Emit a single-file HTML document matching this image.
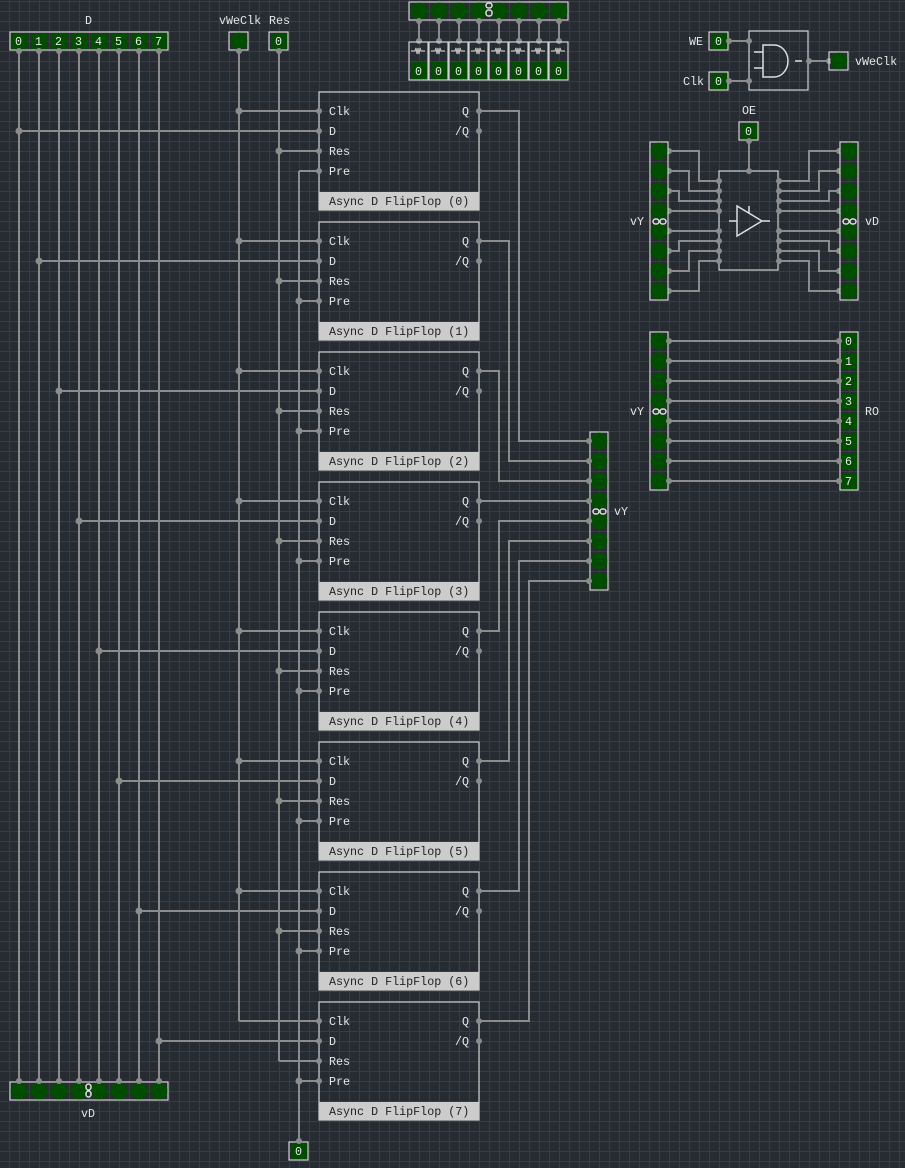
<!DOCTYPE html>
<html><head><meta charset="utf-8"><style>
html,body{margin:0;padding:0;background:#262c31;}
svg{display:block}
text{font-family:"Liberation Mono","DejaVu Sans Mono",monospace;font-size:11.7px;fill:#e6e6e6}
.w{stroke:#8c8c8c;stroke-width:2;fill:none}
.b{stroke:#d0d0d0;stroke-width:1.2;fill:none}
.g{fill:#004d00}
.d{fill:#8c8c8c}
.t{fill:#222;font-size:11.7px}
</style></head><body>
<svg width="905" height="1168" viewBox="0 0 905 1168" xmlns="http://www.w3.org/2000/svg">
<defs>
<pattern id="gp" x="9" y="1" width="10" height="10" patternUnits="userSpaceOnUse">
<rect x="0" y="0" width="10" height="1" fill="#363e44"/><rect x="0" y="0" width="1" height="10" fill="#363e44"/>
</pattern>
</defs>
<rect width="905" height="1168" fill="#262c31"/>
<rect width="905" height="1168" fill="url(#gp)"/>

<path class="w" d="M19 51V1081M39 51V1081M59 51V1081M79 51V1081M99 51V1081M119 51V1081M139 51V1081M159 51V1081M239 51V1021M279 51V1061M299 171V1141"/>

<path class="w" d="M239 111H319M19 131H319M279 151H319M299 171H319
M239 241H319M39 261H319M279 281H319M299 301H319
M239 371H319M59 391H319M279 411H319M299 431H319
M239 501H319M79 521H319M279 541H319M299 561H319
M239 631H319M99 651H319M279 671H319M299 691H319
M239 761H319M119 781H319M279 801H319M299 821H319
M239 891H319M139 911H319M279 931H319M299 951H319
M239 1021H319M159 1041H319M279 1061H319M299 1081H319
M479 111H519V441H589M479 241H509V461H589M479 371H499V481H589M479 501H589
M479 631H499V521H589M479 761H509V541H589M479 891H519V561H589M479 1021H529V581H589"/>
<g class="d">
<circle cx="239" cy="111" r="3.5"/><circle cx="19" cy="131" r="3.5"/><circle cx="279" cy="151" r="3.5"/>
<circle cx="239" cy="241" r="3.5"/><circle cx="39" cy="261" r="3.5"/><circle cx="279" cy="281" r="3.5"/><circle cx="299" cy="301" r="3.5"/>
<circle cx="239" cy="371" r="3.5"/><circle cx="59" cy="391" r="3.5"/><circle cx="279" cy="411" r="3.5"/><circle cx="299" cy="431" r="3.5"/>
<circle cx="239" cy="501" r="3.5"/><circle cx="79" cy="521" r="3.5"/><circle cx="279" cy="541" r="3.5"/><circle cx="299" cy="561" r="3.5"/>
<circle cx="239" cy="631" r="3.5"/><circle cx="99" cy="651" r="3.5"/><circle cx="279" cy="671" r="3.5"/><circle cx="299" cy="691" r="3.5"/>
<circle cx="239" cy="761" r="3.5"/><circle cx="119" cy="781" r="3.5"/><circle cx="279" cy="801" r="3.5"/><circle cx="299" cy="821" r="3.5"/>
<circle cx="239" cy="891" r="3.5"/><circle cx="139" cy="911" r="3.5"/><circle cx="279" cy="931" r="3.5"/><circle cx="299" cy="951" r="3.5"/>
<circle cx="159" cy="1041" r="3.5"/><circle cx="299" cy="1081" r="3.5"/>
</g>

<g id="ffs">
<g transform="translate(0,0)">
<rect class="b" x="319" y="92" width="160" height="118"/><rect x="319" y="192" width="160" height="18" fill="#cccccc"/>
<text x="329" y="115">Clk</text><text x="329" y="135">D</text><text x="329" y="155">Res</text><text x="329" y="175">Pre</text>
<text x="462" y="115">Q</text><text x="455" y="135">/Q</text><text class="t" x="329" y="205">Async D FlipFlop (0)</text>
<g class="d"><circle cx="319" cy="111" r="3"/><circle cx="319" cy="131" r="3"/><circle cx="319" cy="151" r="3"/><circle cx="319" cy="171" r="3"/><circle cx="479" cy="111" r="3"/><circle cx="479" cy="131" r="3"/></g>
</g>
<g transform="translate(0,130)">
<rect class="b" x="319" y="92" width="160" height="118"/><rect x="319" y="192" width="160" height="18" fill="#cccccc"/>
<text x="329" y="115">Clk</text><text x="329" y="135">D</text><text x="329" y="155">Res</text><text x="329" y="175">Pre</text>
<text x="462" y="115">Q</text><text x="455" y="135">/Q</text><text class="t" x="329" y="205">Async D FlipFlop (1)</text>
<g class="d"><circle cx="319" cy="111" r="3"/><circle cx="319" cy="131" r="3"/><circle cx="319" cy="151" r="3"/><circle cx="319" cy="171" r="3"/><circle cx="479" cy="111" r="3"/><circle cx="479" cy="131" r="3"/></g>
</g>
<g transform="translate(0,260)">
<rect class="b" x="319" y="92" width="160" height="118"/><rect x="319" y="192" width="160" height="18" fill="#cccccc"/>
<text x="329" y="115">Clk</text><text x="329" y="135">D</text><text x="329" y="155">Res</text><text x="329" y="175">Pre</text>
<text x="462" y="115">Q</text><text x="455" y="135">/Q</text><text class="t" x="329" y="205">Async D FlipFlop (2)</text>
<g class="d"><circle cx="319" cy="111" r="3"/><circle cx="319" cy="131" r="3"/><circle cx="319" cy="151" r="3"/><circle cx="319" cy="171" r="3"/><circle cx="479" cy="111" r="3"/><circle cx="479" cy="131" r="3"/></g>
</g>
<g transform="translate(0,390)">
<rect class="b" x="319" y="92" width="160" height="118"/><rect x="319" y="192" width="160" height="18" fill="#cccccc"/>
<text x="329" y="115">Clk</text><text x="329" y="135">D</text><text x="329" y="155">Res</text><text x="329" y="175">Pre</text>
<text x="462" y="115">Q</text><text x="455" y="135">/Q</text><text class="t" x="329" y="205">Async D FlipFlop (3)</text>
<g class="d"><circle cx="319" cy="111" r="3"/><circle cx="319" cy="131" r="3"/><circle cx="319" cy="151" r="3"/><circle cx="319" cy="171" r="3"/><circle cx="479" cy="111" r="3"/><circle cx="479" cy="131" r="3"/></g>
</g>
<g transform="translate(0,520)">
<rect class="b" x="319" y="92" width="160" height="118"/><rect x="319" y="192" width="160" height="18" fill="#cccccc"/>
<text x="329" y="115">Clk</text><text x="329" y="135">D</text><text x="329" y="155">Res</text><text x="329" y="175">Pre</text>
<text x="462" y="115">Q</text><text x="455" y="135">/Q</text><text class="t" x="329" y="205">Async D FlipFlop (4)</text>
<g class="d"><circle cx="319" cy="111" r="3"/><circle cx="319" cy="131" r="3"/><circle cx="319" cy="151" r="3"/><circle cx="319" cy="171" r="3"/><circle cx="479" cy="111" r="3"/><circle cx="479" cy="131" r="3"/></g>
</g>
<g transform="translate(0,650)">
<rect class="b" x="319" y="92" width="160" height="118"/><rect x="319" y="192" width="160" height="18" fill="#cccccc"/>
<text x="329" y="115">Clk</text><text x="329" y="135">D</text><text x="329" y="155">Res</text><text x="329" y="175">Pre</text>
<text x="462" y="115">Q</text><text x="455" y="135">/Q</text><text class="t" x="329" y="205">Async D FlipFlop (5)</text>
<g class="d"><circle cx="319" cy="111" r="3"/><circle cx="319" cy="131" r="3"/><circle cx="319" cy="151" r="3"/><circle cx="319" cy="171" r="3"/><circle cx="479" cy="111" r="3"/><circle cx="479" cy="131" r="3"/></g>
</g>
<g transform="translate(0,780)">
<rect class="b" x="319" y="92" width="160" height="118"/><rect x="319" y="192" width="160" height="18" fill="#cccccc"/>
<text x="329" y="115">Clk</text><text x="329" y="135">D</text><text x="329" y="155">Res</text><text x="329" y="175">Pre</text>
<text x="462" y="115">Q</text><text x="455" y="135">/Q</text><text class="t" x="329" y="205">Async D FlipFlop (6)</text>
<g class="d"><circle cx="319" cy="111" r="3"/><circle cx="319" cy="131" r="3"/><circle cx="319" cy="151" r="3"/><circle cx="319" cy="171" r="3"/><circle cx="479" cy="111" r="3"/><circle cx="479" cy="131" r="3"/></g>
</g>
<g transform="translate(0,910)">
<rect class="b" x="319" y="92" width="160" height="118"/><rect x="319" y="192" width="160" height="18" fill="#cccccc"/>
<text x="329" y="115">Clk</text><text x="329" y="135">D</text><text x="329" y="155">Res</text><text x="329" y="175">Pre</text>
<text x="462" y="115">Q</text><text x="455" y="135">/Q</text><text class="t" x="329" y="205">Async D FlipFlop (7)</text>
<g class="d"><circle cx="319" cy="111" r="3"/><circle cx="319" cy="131" r="3"/><circle cx="319" cy="151" r="3"/><circle cx="319" cy="171" r="3"/><circle cx="479" cy="111" r="3"/><circle cx="479" cy="131" r="3"/></g>
</g>
</g>

<text x="85" y="24">D</text>
<rect class="b" x="10" y="32" width="158" height="18"/>
<g class="g"><rect x="11" y="33" width="16" height="16"/><rect x="31" y="33" width="16" height="16"/><rect x="51" y="33" width="16" height="16"/><rect x="71" y="33" width="16" height="16"/><rect x="91" y="33" width="16" height="16"/><rect x="111" y="33" width="16" height="16"/><rect x="131" y="33" width="16" height="16"/><rect x="151" y="33" width="16" height="16"/></g>
<text x="15" y="45">0</text><text x="35" y="45">1</text><text x="55" y="45">2</text><text x="75" y="45">3</text><text x="95" y="45">4</text><text x="115" y="45">5</text><text x="135" y="45">6</text><text x="155" y="45">7</text>
<g class="d"><circle cx="19" cy="51" r="3"/><circle cx="39" cy="51" r="3"/><circle cx="59" cy="51" r="3"/><circle cx="79" cy="51" r="3"/><circle cx="99" cy="51" r="3"/><circle cx="119" cy="51" r="3"/><circle cx="139" cy="51" r="3"/><circle cx="159" cy="51" r="3"/></g>

<text x="219" y="24">vWeClk</text>
<rect class="b" x="229" y="32" width="19" height="18"/><circle class="g" cx="239" cy="41" r="8.5"/>
<circle class="d" cx="239" cy="51" r="3"/>
<text x="269" y="24">Res</text>
<rect class="b" x="269" y="32" width="19" height="18"/><rect class="g" x="271" y="33" width="16" height="16"/><text x="275" y="45">0</text>
<circle class="d" cx="279" cy="51" r="3"/>

<rect class="b" x="10" y="1082" width="158" height="18"/>
<g class="g"><circle cx="19" cy="1091" r="8.5"/><circle cx="39" cy="1091" r="8.5"/><circle cx="59" cy="1091" r="8.5"/><circle cx="79" cy="1091" r="8.5"/><circle cx="99" cy="1091" r="8.5"/><circle cx="119" cy="1091" r="8.5"/><circle cx="139" cy="1091" r="8.5"/><circle cx="159" cy="1091" r="8.5"/></g>
<g class="d"><circle cx="19" cy="1081" r="3"/><circle cx="39" cy="1081" r="3"/><circle cx="59" cy="1081" r="3"/><circle cx="79" cy="1081" r="3"/><circle cx="99" cy="1081" r="3"/><circle cx="119" cy="1081" r="3"/><circle cx="139" cy="1081" r="3"/><circle cx="159" cy="1081" r="3"/></g>
<g fill="none" stroke="#ddd" stroke-width="1.5"><rect x="86" y="1084" width="5" height="6" rx="2.5"/><rect x="86" y="1091" width="5" height="6" rx="2.5"/></g>
<text x="81" y="1117">vD</text>

<rect class="b" x="289" y="1142" width="19" height="18"/><rect class="g" x="291" y="1143" width="16" height="16"/><text x="295" y="1155">0</text>
<circle class="d" cx="299" cy="1141" r="3"/>

<rect class="b" x="590" y="432" width="18" height="158"/>
<g class="g"><circle cx="599" cy="441" r="8.5"/><circle cx="599" cy="461" r="8.5"/><circle cx="599" cy="481" r="8.5"/><circle cx="599" cy="501" r="8.5"/><circle cx="599" cy="521" r="8.5"/><circle cx="599" cy="541" r="8.5"/><circle cx="599" cy="561" r="8.5"/><circle cx="599" cy="581" r="8.5"/></g>
<g class="d"><circle cx="589" cy="441" r="3"/><circle cx="589" cy="461" r="3"/><circle cx="589" cy="481" r="3"/><circle cx="589" cy="501" r="3"/><circle cx="589" cy="521" r="3"/><circle cx="589" cy="541" r="3"/><circle cx="589" cy="561" r="3"/><circle cx="589" cy="581" r="3"/></g>
<g fill="none" stroke="#ddd" stroke-width="1.5"><rect x="593" y="509" width="6" height="5" rx="2.5"/><rect x="600" y="509" width="6" height="5" rx="2.5"/></g>
<text x="614" y="515">vY</text>

<rect class="b" x="409" y="2" width="159" height="18"/>
<g class="g"><circle cx="419" cy="11" r="8.5"/><circle cx="439" cy="11" r="8.5"/><circle cx="459" cy="11" r="8.5"/><circle cx="479" cy="11" r="8.5"/><circle cx="499" cy="11" r="8.5"/><circle cx="519" cy="11" r="8.5"/><circle cx="539" cy="11" r="8.5"/><circle cx="559" cy="11" r="8.5"/></g>
<g fill="none" stroke="#ddd" stroke-width="1.5"><rect x="486" y="3" width="6" height="5" rx="2.5"/><rect x="486" y="10" width="6" height="6" rx="2.5"/></g>
<path class="w" d="M419 21V41M439 21V41M459 21V41M479 21V41M499 21V41M519 21V41M539 21V41M559 21V41"/>
<g class="d"><circle cx="419" cy="21" r="3"/><circle cx="439" cy="21" r="3"/><circle cx="459" cy="21" r="3"/><circle cx="479" cy="21" r="3"/><circle cx="499" cy="21" r="3"/><circle cx="519" cy="21" r="3"/><circle cx="539" cy="21" r="3"/><circle cx="559" cy="21" r="3"/>
<circle cx="419" cy="41" r="3"/><circle cx="439" cy="41" r="3"/><circle cx="459" cy="41" r="3"/><circle cx="479" cy="41" r="3"/><circle cx="499" cy="41" r="3"/><circle cx="519" cy="41" r="3"/><circle cx="539" cy="41" r="3"/><circle cx="559" cy="41" r="3"/></g>
<g id="res">
<g><rect class="b" x="409" y="42" width="19" height="38"/><rect class="g" x="411" y="62" width="16" height="17"/><text x="415" y="75">0</text><path d="M411 51h4l1-3 1 6 1-6 1 6 1-6 1 3h4" stroke="#bbb" stroke-width="1.2" fill="none"/></g>
<g transform="translate(20,0)"><rect class="b" x="409" y="42" width="19" height="38"/><rect class="g" x="411" y="62" width="16" height="17"/><text x="415" y="75">0</text><path d="M411 51h4l1-3 1 6 1-6 1 6 1-6 1 3h4" stroke="#bbb" stroke-width="1.2" fill="none"/></g>
<g transform="translate(40,0)"><rect class="b" x="409" y="42" width="19" height="38"/><rect class="g" x="411" y="62" width="16" height="17"/><text x="415" y="75">0</text><path d="M411 51h4l1-3 1 6 1-6 1 6 1-6 1 3h4" stroke="#bbb" stroke-width="1.2" fill="none"/></g>
<g transform="translate(60,0)"><rect class="b" x="409" y="42" width="19" height="38"/><rect class="g" x="411" y="62" width="16" height="17"/><text x="415" y="75">0</text><path d="M411 51h4l1-3 1 6 1-6 1 6 1-6 1 3h4" stroke="#bbb" stroke-width="1.2" fill="none"/></g>
<g transform="translate(80,0)"><rect class="b" x="409" y="42" width="19" height="38"/><rect class="g" x="411" y="62" width="16" height="17"/><text x="415" y="75">0</text><path d="M411 51h4l1-3 1 6 1-6 1 6 1-6 1 3h4" stroke="#bbb" stroke-width="1.2" fill="none"/></g>
<g transform="translate(100,0)"><rect class="b" x="409" y="42" width="19" height="38"/><rect class="g" x="411" y="62" width="16" height="17"/><text x="415" y="75">0</text><path d="M411 51h4l1-3 1 6 1-6 1 6 1-6 1 3h4" stroke="#bbb" stroke-width="1.2" fill="none"/></g>
<g transform="translate(120,0)"><rect class="b" x="409" y="42" width="19" height="38"/><rect class="g" x="411" y="62" width="16" height="17"/><text x="415" y="75">0</text><path d="M411 51h4l1-3 1 6 1-6 1 6 1-6 1 3h4" stroke="#bbb" stroke-width="1.2" fill="none"/></g>
<g transform="translate(140,0)"><rect class="b" x="409" y="42" width="19" height="38"/><rect class="g" x="411" y="62" width="16" height="17"/><text x="415" y="75">0</text><path d="M411 51h4l1-3 1 6 1-6 1 6 1-6 1 3h4" stroke="#bbb" stroke-width="1.2" fill="none"/></g>
</g>

<text x="689" y="45">WE</text>
<rect class="b" x="709" y="32" width="19" height="18"/><rect class="g" x="711" y="33" width="16" height="16"/><text x="715" y="45">0</text>
<text x="683" y="85">Clk</text>
<rect class="b" x="709" y="72" width="19" height="18"/><rect class="g" x="711" y="73" width="16" height="16"/><text x="715" y="85">0</text>
<path class="w" d="M729 41H749M729 81H749M809 61H829"/>
<rect class="b" x="749" y="31" width="59" height="59"/>
<path d="M763 45H774A14 16 0 0 1 774 77H763Z M754 52H763M754 68H763M795 61H802" stroke="#ddd" stroke-width="1.5" fill="none"/>
<g class="d"><circle cx="729" cy="41" r="3"/><circle cx="749" cy="41" r="3"/><circle cx="729" cy="81" r="3"/><circle cx="749" cy="81" r="3"/><circle cx="809" cy="61" r="3"/><circle cx="829" cy="61" r="3"/></g>
<rect class="b" x="829" y="52" width="19" height="18"/><circle class="g" cx="839" cy="61" r="8.5"/>
<text x="855" y="65">vWeClk</text>

<text x="742" y="114">OE</text>
<rect class="b" x="739" y="122" width="19" height="18"/><rect class="g" x="741" y="123" width="16" height="16"/><text x="745" y="135">0</text>
<path class="w" d="M749 141V171"/>
<rect class="b" x="719" y="171" width="59" height="99"/>
<path d="M737 206V236L762 221Z M729 221H737M762 221H770M749 206V213" stroke="#ddd" stroke-width="1.5" fill="none"/>
<path class="w" d="M669 151H699V181H719M669 171H689V191H719M669 191H679V201H719M669 211H719M669 231H719M669 251H679V241H719M669 271H689V251H719M669 291H699V261H719
M839 151H809V181H779M839 171H819V191H779M839 191H829V201H779M839 211H779M839 231H779M839 251H829V241H779M839 271H819V251H779M839 291H809V261H779"/>
<g class="d"><circle cx="749" cy="141" r="3"/><circle cx="749" cy="171" r="3"/>
<circle cx="719" cy="181" r="3"/><circle cx="719" cy="191" r="3"/><circle cx="719" cy="201" r="3"/><circle cx="719" cy="211" r="3"/><circle cx="719" cy="231" r="3"/><circle cx="719" cy="241" r="3"/><circle cx="719" cy="251" r="3"/><circle cx="719" cy="261" r="3"/>
<circle cx="779" cy="181" r="3"/><circle cx="779" cy="191" r="3"/><circle cx="779" cy="201" r="3"/><circle cx="779" cy="211" r="3"/><circle cx="779" cy="231" r="3"/><circle cx="779" cy="241" r="3"/><circle cx="779" cy="251" r="3"/><circle cx="779" cy="261" r="3"/>
<circle cx="669" cy="151" r="3"/><circle cx="669" cy="171" r="3"/><circle cx="669" cy="191" r="3"/><circle cx="669" cy="211" r="3"/><circle cx="669" cy="231" r="3"/><circle cx="669" cy="251" r="3"/><circle cx="669" cy="271" r="3"/><circle cx="669" cy="291" r="3"/>
<circle cx="839" cy="151" r="3"/><circle cx="839" cy="171" r="3"/><circle cx="839" cy="191" r="3"/><circle cx="839" cy="211" r="3"/><circle cx="839" cy="231" r="3"/><circle cx="839" cy="251" r="3"/><circle cx="839" cy="271" r="3"/><circle cx="839" cy="291" r="3"/></g>
<rect class="b" x="650" y="142" width="18" height="158"/>
<rect class="b" x="840" y="142" width="18" height="158"/>
<g class="g"><circle cx="659" cy="151" r="8.5"/><circle cx="659" cy="171" r="8.5"/><circle cx="659" cy="191" r="8.5"/><circle cx="659" cy="211" r="8.5"/><circle cx="659" cy="231" r="8.5"/><circle cx="659" cy="251" r="8.5"/><circle cx="659" cy="271" r="8.5"/><circle cx="659" cy="291" r="8.5"/>
<circle cx="849" cy="151" r="8.5"/><circle cx="849" cy="171" r="8.5"/><circle cx="849" cy="191" r="8.5"/><circle cx="849" cy="211" r="8.5"/><circle cx="849" cy="231" r="8.5"/><circle cx="849" cy="251" r="8.5"/><circle cx="849" cy="271" r="8.5"/><circle cx="849" cy="291" r="8.5"/></g>
<g fill="none" stroke="#ddd" stroke-width="1.5"><rect x="653" y="219" width="6" height="5" rx="2.5"/><rect x="660" y="219" width="6" height="5" rx="2.5"/><rect x="843" y="219" width="6" height="5" rx="2.5"/><rect x="850" y="219" width="6" height="5" rx="2.5"/></g>
<text x="630" y="225">vY</text><text x="865" y="225">vD</text>

<path class="w" d="M669 341H839M669 361H839M669 381H839M669 401H839M669 421H839M669 441H839M669 461H839M669 481H839"/>
<rect class="b" x="650" y="332" width="18" height="158"/>
<rect class="b" x="840" y="332" width="18" height="158"/>
<g class="g"><circle cx="659" cy="341" r="8.5"/><circle cx="659" cy="361" r="8.5"/><circle cx="659" cy="381" r="8.5"/><circle cx="659" cy="401" r="8.5"/><circle cx="659" cy="421" r="8.5"/><circle cx="659" cy="441" r="8.5"/><circle cx="659" cy="461" r="8.5"/><circle cx="659" cy="481" r="8.5"/>
<rect x="841" y="333" width="16" height="16"/><rect x="841" y="353" width="16" height="16"/><rect x="841" y="373" width="16" height="16"/><rect x="841" y="393" width="16" height="16"/><rect x="841" y="413" width="16" height="16"/><rect x="841" y="433" width="16" height="16"/><rect x="841" y="453" width="16" height="16"/><rect x="841" y="473" width="16" height="16"/></g>
<g class="d"><circle cx="669" cy="341" r="3"/><circle cx="669" cy="361" r="3"/><circle cx="669" cy="381" r="3"/><circle cx="669" cy="401" r="3"/><circle cx="669" cy="421" r="3"/><circle cx="669" cy="441" r="3"/><circle cx="669" cy="461" r="3"/><circle cx="669" cy="481" r="3"/>
<circle cx="839" cy="341" r="3"/><circle cx="839" cy="361" r="3"/><circle cx="839" cy="381" r="3"/><circle cx="839" cy="401" r="3"/><circle cx="839" cy="421" r="3"/><circle cx="839" cy="441" r="3"/><circle cx="839" cy="461" r="3"/><circle cx="839" cy="481" r="3"/></g>
<g fill="none" stroke="#ddd" stroke-width="1.5"><rect x="653" y="409" width="6" height="5" rx="2.5"/><rect x="660" y="409" width="6" height="5" rx="2.5"/></g>
<text x="845" y="345">0</text><text x="845" y="365">1</text><text x="845" y="385">2</text><text x="845" y="405">3</text><text x="845" y="425">4</text><text x="845" y="445">5</text><text x="845" y="465">6</text><text x="845" y="485">7</text>
<text x="630" y="415">vY</text><text x="865" y="415">RO</text>
</svg>
</body></html>
